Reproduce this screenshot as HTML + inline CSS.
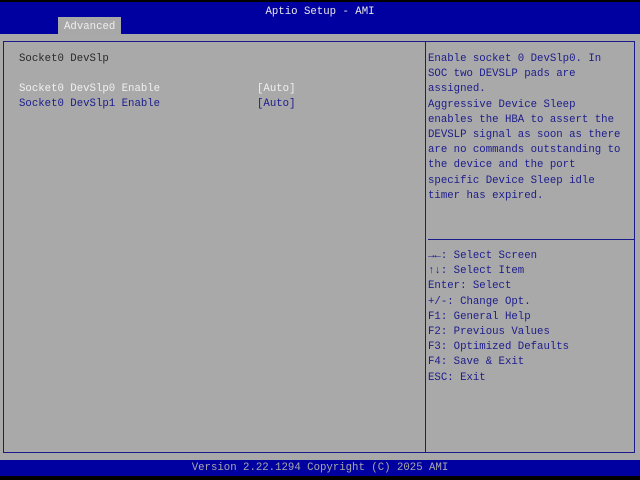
<html><head><style>
body{margin:0;width:640px;height:480px;background:#000;position:relative;overflow:hidden;font-family:"Liberation Mono","DejaVu Sans Mono",monospace;font-size:10.7px;}
div{position:absolute;}
.t{white-space:pre;line-height:15.2px;}
</style></head><body>
<div style="left:0;top:2px;width:640px;height:32px;background:#0000a0"></div>
<div class="t" style="left:0;top:5px;width:640px;text-align:center;color:#e8e8e8;">Aptio Setup - AMI</div>
<div style="left:58px;top:17px;width:63px;height:17px;background:#a8a8a8"></div>
<div class="t" style="left:64px;top:20px;color:#eeeeee;">Advanced</div>
<div style="left:0;top:34px;width:640px;height:426px;background:#a9a9a9"></div>
<div style="left:3px;top:41px;width:630px;height:410px;border:1px solid #1a1a8a"></div>
<div style="left:425px;top:42px;width:1px;height:410px;background:#1a1a8a"></div>
<div style="left:428px;top:239px;width:206px;height:1px;background:#1a1a8a"></div>
<div class="t" style="left:19px;top:52px;color:#2a2a2a;">Socket0 DevSlp</div>
<div class="t" style="left:19px;top:82px;color:#f0f0f0;">Socket0 DevSlp0 Enable</div>
<div class="t" style="left:257px;top:82px;color:#f0f0f0;">[Auto]</div>
<div class="t" style="left:19px;top:97px;color:#1c1c8c;">Socket0 DevSlp1 Enable</div>
<div class="t" style="left:257px;top:97px;color:#1c1c8c;">[Auto]</div>
<div class="t" style="left:428px;top:52px;color:#1c1c8c;">Enable socket 0 DevSlp0. In
SOC two DEVSLP pads are
assigned.
Aggressive Device Sleep
enables the HBA to assert the
DEVSLP signal as soon as there
are no commands outstanding to
the device and the port
specific Device Sleep idle
timer has expired.</div>
<div class="t" style="left:428px;top:249px;color:#1c1c8c;">→←: Select Screen
↑↓: Select Item
Enter: Select
+/-: Change Opt.
F1: General Help
F2: Previous Values
F3: Optimized Defaults
F4: Save &amp; Exit
ESC: Exit</div>
<div style="left:0;top:460px;width:640px;height:16px;background:#0000a0"></div>
<div class="t" style="left:0;top:461px;width:640px;text-align:center;color:#a8a8a8;">Version 2.22.1294 Copyright (C) 2025 AMI</div>
</body></html>
